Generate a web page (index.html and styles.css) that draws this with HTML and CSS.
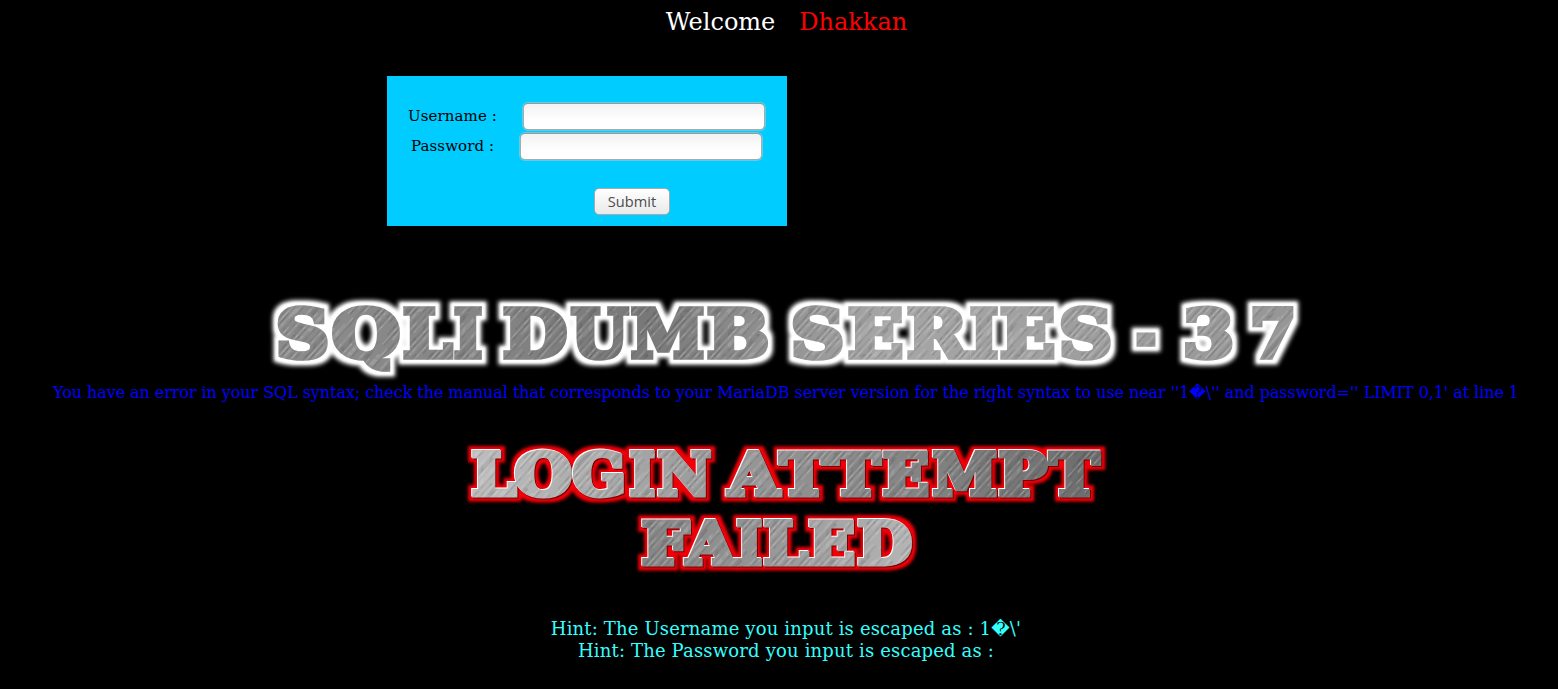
FILE: index.html
```
<!DOCTYPE html>
<html lang="en">
<head>
<meta charset="utf-8">
<title>Welcome</title>
<link rel="stylesheet" href="styles.css">
</head>
<body>
<header class="welcome"><span>Welcome</span><span class="name">Dhakkan</span></header>
<form class="login">
  <label class="row user"><span>Username :</span><input class="field" type="text"></label>
  <label class="row pass"><span>Password :</span><input class="field" type="password"></label>
  <button class="submit" type="button">Submit</button>
</form>
<main class="result">
<svg class="banner" width="1048" height="92" viewBox="262 290 1048 92">
  <defs>
    <linearGradient id="steel" gradientUnits="userSpaceOnUse" x1="277" y1="0" x2="1294" y2="0">
      <stop offset="0" stop-color="#8c8c8c"/><stop offset=".2" stop-color="#858585"/><stop offset=".36" stop-color="#787878"/><stop offset=".46" stop-color="#8c8c8c"/><stop offset=".6" stop-color="#a6a6a6"/><stop offset="1" stop-color="#969696"/>
    </linearGradient>
    <pattern id="brush" width="23" height="90" patternUnits="userSpaceOnUse" patternTransform="rotate(42)">
      <path d="M1 0V60M8.5 20V90M15 0V40M19.5 50V90" stroke="#fff" stroke-opacity=".15"/>
      <path d="M4 0V50M10.5 40V90M17 0V90M22 30V70" stroke="#222" stroke-opacity=".14"/>
      <path d="M13 10V80" stroke="#fff" stroke-width="2" stroke-opacity=".09"/>
      <path d="M6 10V80" stroke="#000" stroke-width="2" stroke-opacity=".07"/>
    </pattern>
    <filter id="whiteGlow" filterUnits="userSpaceOnUse" x="262" y="290" width="1048" height="92" color-interpolation-filters="sRGB">
      <feMorphology in="SourceAlpha" operator="dilate" radius="5" result="wide"/>
      <feGaussianBlur in="wide" stdDeviation="2.2" result="soft"/>
      <feFlood flood-color="#fff"/><feComposite in2="soft" operator="in" result="glow"/>
      <feMorphology in="SourceAlpha" operator="dilate" radius="3" result="near"/>
      <feGaussianBlur in="near" stdDeviation="1" result="nearSoft"/>
      <feFlood flood-color="#fff"/><feComposite in2="nearSoft" operator="in" result="edge"/>
      <feMerge><feMergeNode in="glow"/><feMergeNode in="edge"/><feMergeNode in="SourceGraphic"/></feMerge>
    </filter>
    <g id="title">
      <text class="slab series" y="357"><tspan x="276" textLength="53" lengthAdjust="spacingAndGlyphs">S</tspan><tspan x="332" textLength="68" lengthAdjust="spacingAndGlyphs">Q</tspan><tspan x="403" textLength="49" lengthAdjust="spacingAndGlyphs">L</tspan><tspan x="454" textLength="28" lengthAdjust="spacingAndGlyphs">I</tspan></text>
      <text class="slab series" y="357"><tspan x="503" textLength="64" lengthAdjust="spacingAndGlyphs">D</tspan><tspan x="571" textLength="57" lengthAdjust="spacingAndGlyphs">U</tspan><tspan x="631" textLength="73" lengthAdjust="spacingAndGlyphs">M</tspan><tspan x="707" textLength="62" lengthAdjust="spacingAndGlyphs">B</tspan></text>
      <text class="slab series" y="357"><tspan x="791" textLength="53" lengthAdjust="spacingAndGlyphs">S</tspan><tspan x="848" textLength="55" lengthAdjust="spacingAndGlyphs">E</tspan><tspan x="907" textLength="60" lengthAdjust="spacingAndGlyphs">R</tspan><tspan x="970" textLength="28" lengthAdjust="spacingAndGlyphs">I</tspan><tspan x="1000" textLength="55" lengthAdjust="spacingAndGlyphs">E</tspan><tspan x="1059" textLength="53" lengthAdjust="spacingAndGlyphs">S</tspan></text>
      <text class="slab series" y="357"><tspan x="1136" textLength="20" lengthAdjust="spacingAndGlyphs">-</tspan></text>
      <text class="slab series" y="357"><tspan x="1183" textLength="51" lengthAdjust="spacingAndGlyphs">3</tspan><tspan x="1250" textLength="46" lengthAdjust="spacingAndGlyphs">7</tspan></text>
    </g>
  </defs>
  <g filter="url(#whiteGlow)"><use href="#title" class="steel"/><use href="#title" class="brush"/></g>
</svg>
<p class="error">You have an error in your SQL syntax; check the manual that corresponds to your MariaDB server version for the right syntax to use near ''1&#xFFFD;\'' and password='' LIMIT 0,1' at line 1</p>
<svg class="failed" width="660" height="150" viewBox="456 436 660 150">
  <defs>
    <linearGradient id="steelTop" gradientUnits="userSpaceOnUse" x1="470" y1="0" x2="1100" y2="0">
      <stop offset="0" stop-color="#bdbdbd"/><stop offset=".4" stop-color="#999"/><stop offset=".65" stop-color="#888"/><stop offset="1" stop-color="#6c6c6c"/>
    </linearGradient>
    <linearGradient id="steelLow" gradientUnits="userSpaceOnUse" x1="640" y1="0" x2="912" y2="0">
      <stop offset="0" stop-color="#858585"/><stop offset=".4" stop-color="#939393"/><stop offset="1" stop-color="#b5b5b5"/>
    </linearGradient>
    <filter id="redGlow" filterUnits="userSpaceOnUse" x="456" y="436" width="660" height="150" color-interpolation-filters="sRGB">
      <feMorphology in="SourceAlpha" operator="dilate" radius="4" result="wide"/>
      <feGaussianBlur in="wide" stdDeviation="1.7" result="soft"/>
      <feFlood flood-color="#f00008"/><feComposite in2="soft" operator="in" result="glow"/>
      <feOffset in="SourceAlpha" dx="-1" dy="-1" result="lit"/>
      <feFlood flood-color="#fff"/><feComposite in2="lit" operator="in" result="light"/>
      <feOffset in="SourceAlpha" dx="1" dy="1" result="low"/>
      <feFlood flood-color="#700"/><feComposite in2="low" operator="in" result="shade"/>
      <feMerge><feMergeNode in="glow"/><feMergeNode in="shade"/><feMergeNode in="light"/><feMergeNode in="SourceGraphic"/></feMerge>
    </filter>
    <g id="attempt">
      <text class="slab login-word" y="495"><tspan x="472" textLength="44" lengthAdjust="spacingAndGlyphs">L</tspan><tspan x="515" textLength="57" lengthAdjust="spacingAndGlyphs">O</tspan><tspan x="573" textLength="53" lengthAdjust="spacingAndGlyphs">G</tspan><tspan x="630" textLength="25" lengthAdjust="spacingAndGlyphs">I</tspan><tspan x="658" textLength="53" lengthAdjust="spacingAndGlyphs">N</tspan></text>
      <text class="slab login-word" y="495"><tspan x="729" textLength="50" lengthAdjust="spacingAndGlyphs">A</tspan><tspan x="780" textLength="48" lengthAdjust="spacingAndGlyphs">T</tspan><tspan x="832" textLength="48" lengthAdjust="spacingAndGlyphs">T</tspan><tspan x="883" textLength="46" lengthAdjust="spacingAndGlyphs">E</tspan><tspan x="933" textLength="64" lengthAdjust="spacingAndGlyphs">M</tspan><tspan x="999" textLength="48" lengthAdjust="spacingAndGlyphs">P</tspan><tspan x="1050" textLength="49" lengthAdjust="spacingAndGlyphs">T</tspan></text>
    </g>
    <g id="fail">
      <text class="slab login-word" y="564"><tspan x="642" textLength="47" lengthAdjust="spacingAndGlyphs">F</tspan><tspan x="687" textLength="48" lengthAdjust="spacingAndGlyphs">A</tspan><tspan x="737" textLength="25" lengthAdjust="spacingAndGlyphs">I</tspan><tspan x="764" textLength="44" lengthAdjust="spacingAndGlyphs">L</tspan><tspan x="809" textLength="46" lengthAdjust="spacingAndGlyphs">E</tspan><tspan x="858" textLength="54" lengthAdjust="spacingAndGlyphs">D</tspan></text>
    </g>
  </defs>
  <g filter="url(#redGlow)"><use href="#attempt" class="steel-top"/><use href="#fail" class="steel-low"/><use href="#attempt" class="brush"/><use href="#fail" class="brush"/></g>
</svg>
<p class="hint">Hint: The Username you input is escaped as : 1&#xFFFD;\'<br>Hint: The Password you input is escaped as :</p>
</main>
</body>
</html>
```
FILE: styles.css
```
* { box-sizing: border-box; }
body { margin: 0; height: 689px; overflow: hidden; background: #000; color: #fff; font-family: "DejaVu Serif", serif; }
.welcome { height: 76px; padding: 8px 0 0 15px; display: flex; justify-content: center; gap: 24px; font-size: 24px; line-height: 28px; }
.name { color: #f00; }
.login { width: 400px; height: 150px; margin-left: 387px; padding-top: 25px; background: #0cf; color: #000; font-size: 15px; display: flex; flex-direction: column; }
.row { display: flex; align-items: center; height: 30px; line-height: 30px; letter-spacing: .1px; }
.user { padding-left: 21px; gap: 26px; }
.pass { padding-left: 24px; gap: 26px; }
.field { width: 242px; height: 27px; margin: 0; padding: 3px 6px; border: 1px solid; border-color: #999 #aaa #aaa; border-radius: 5px; outline: 0; background: linear-gradient(#f2f2f2, #fff 65%); box-shadow: 0 0 0 1px rgba(190, 205, 210, .5); }
.submit { width: 76px; height: 27px; margin: 27px 0 0 207px; padding: 0 0 2px; border: 1px solid #aaa; border-radius: 5px; background: linear-gradient(#fff, #e9e9e9); color: #4c4c4c; font: 14.6px "Open Sans", "Noto Sans", sans-serif; }
.result { display: flex; flex-direction: column; align-items: center; padding: 64px 0 0 14px; }
.banner, .failed { display: block; flex: none; }
.slab { font-family: "DejaVu Serif", serif; font-weight: bold; stroke-width: 5.6px; stroke-linejoin: miter; stroke-miterlimit: 2; }
.series { font-size: 65.5px; }
.login-word { font-size: 57px; stroke-width: 5px; }
.steel { fill: url(#steel); stroke: url(#steel); }
.steel-top { fill: url(#steelTop); stroke: url(#steelTop); }
.steel-low { fill: url(#steelLow); stroke: url(#steelLow); }
.brush { fill: url(#brush); stroke: url(#brush); }
.error { margin: 0; height: 54px; padding-top: 1px; color: #00f; font-size: 16px; line-height: 20px; letter-spacing: -.067px; white-space: nowrap; }
.hint { margin: 32px 0 0; text-align: center; color: #3ff; font-size: 18px; line-height: 22px; letter-spacing: .16px; }
```
